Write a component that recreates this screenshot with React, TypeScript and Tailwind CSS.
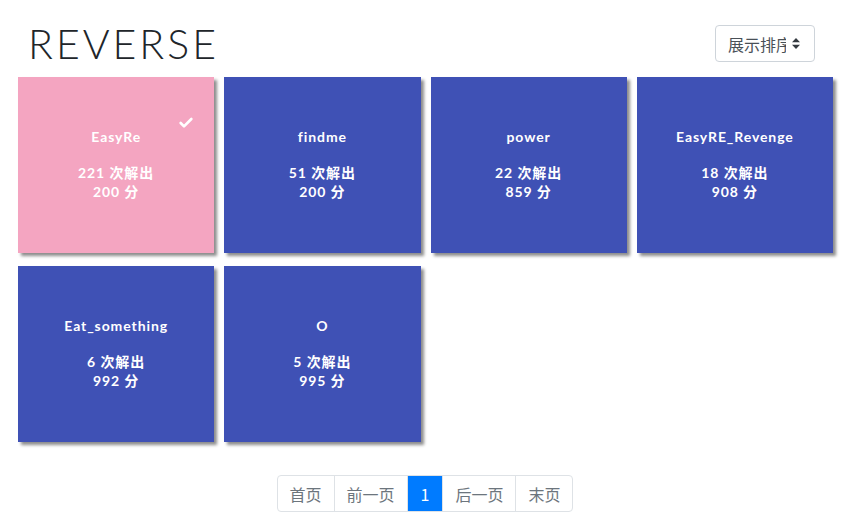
import {Check} from "lucide-react";

type Challenge = {
    name: string;
    solves: number;
    score: number;
    solved?: boolean;
};

const challenges: Challenge[] = [
    {name: "EasyRe", solves: 221, score: 200, solved: true},
    {name: "findme", solves: 51, score: 200},
    {name: "power", solves: 22, score: 859},
    {name: "EasyRE_Revenge", solves: 18, score: 908},
    {name: "Eat_something", solves: 6, score: 992},
    {name: "O", solves: 5, score: 995},
];

const pages = ["首页", "前一页", "1", "后一页", "末页"];

function ChallengeCard({c}: {c: Challenge}) {
    return (
        <div
            className={`relative h-[176px] pb-[2px] flex flex-col items-center justify-center text-white font-bold text-[14px] leading-[19px] tracking-[0.9px] shadow-[3px_3px_3px_rgba(0,0,0,0.45)] ${c.solved ? "bg-[#f4a5c1]" : "bg-[#3f51b5]"}`}
        >
            {c.solved && (
                <Check className="absolute right-[20px] top-[38px] w-[16px] h-[16px]" strokeWidth={4}/>
            )}
            <p className="mb-[17px]">{c.name}</p>
            <p>{c.solves} 次解出</p>
            <p>{c.score} 分</p>
        </div>
    );
}

export default function App() {
    return (
        <div className="w-[853px] min-h-[524px] bg-white font-['Lato','Noto_Sans_CJK_SC',sans-serif]">
            <div className="flex items-center justify-between pl-[28px] pr-[38px] pt-[16px] h-[77px] pb-[6px]">
                <h1 className="text-[41px] font-light tracking-[3px] text-[#212529] leading-none">
                    REVERSE
                </h1>
                <div className="w-[100px] h-[37px] border border-[#ced4da] rounded-[4px] flex items-center pl-[12px] pr-[8px] text-[16px] text-[#495057] overflow-hidden">
                    <span className="whitespace-nowrap overflow-hidden w-[58px] shrink-0 font-['Noto_Sans_CJK_SC',sans-serif]">展示排序</span>
                    <svg className="ml-[6px] shrink-0" width="8" height="11" viewBox="0 0 8 11">
                        <path d="M4 0L8 4.2H0Z M0 6.8H8L4 11Z" fill="#343a40"/>
                    </svg>
                </div>
            </div>

            <div className="grid grid-cols-4 gap-x-[10px] gap-y-[13px] px-[18px] pr-[20px]">
                {challenges.map((c) => (
                    <ChallengeCard key={c.name} c={c}/>
                ))}
            </div>

            <div className="flex justify-center mt-[33px] pr-[3px]">
                <div className="flex border border-[#dee2e6] rounded-[4px] overflow-hidden text-[16px] h-[37px] font-['Noto_Sans_CJK_SC',sans-serif]">
                    {pages.map((p, i) => (
                        <div
                            key={p}
                            className={`flex items-center px-[12px] ${i > 0 ? "border-l border-[#dee2e6]" : ""} ${p === "1" ? "bg-[#007bff] text-white border-[#007bff] px-[13px]" : "text-[#6c757d]"}`}
                        >
                            {p}
                        </div>
                    ))}
                </div>
            </div>
        </div>
    );
}
